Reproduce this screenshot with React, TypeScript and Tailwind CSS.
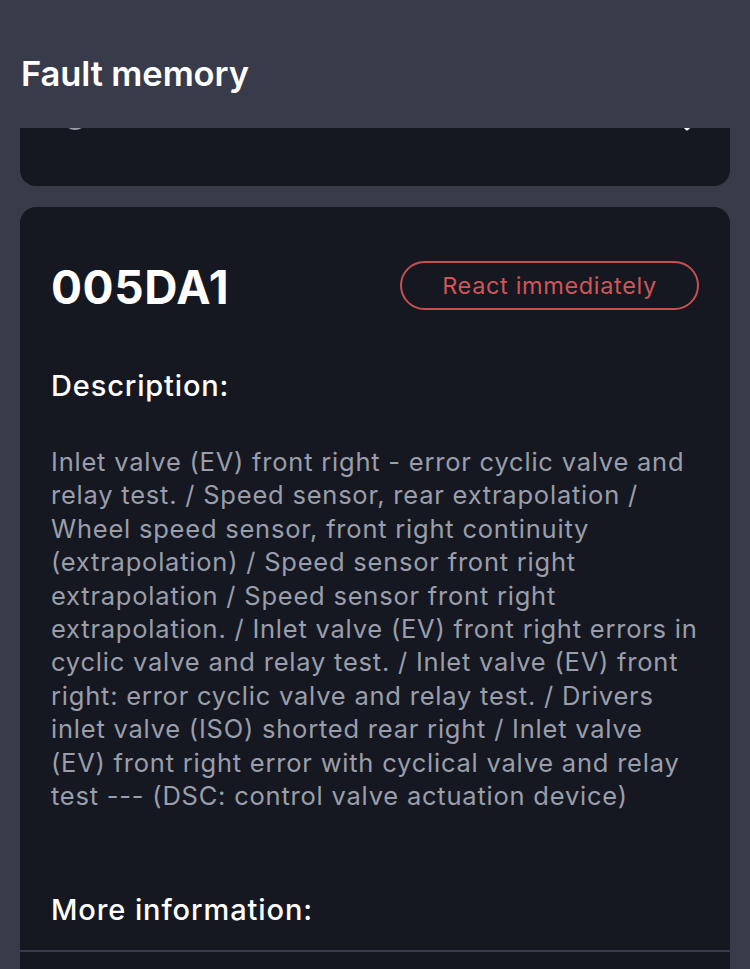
import React from "react";

const lines = [
  "Inlet valve (EV) front right - error cyclic valve and",
  "relay test. / Speed sensor, rear extrapolation /",
  "Wheel speed sensor, front right continuity",
  "(extrapolation) / Speed sensor front right",
  "extrapolation / Speed sensor front right",
  "extrapolation. / Inlet valve (EV) front right errors in",
  "cyclic valve and relay test. / Inlet valve (EV) front",
  "right: error cyclic valve and relay test. / Drivers",
  "inlet valve (ISO) shorted rear right / Inlet valve",
  "(EV) front right error with cyclical valve and relay",
  "test --- (DSC: control valve actuation device)",
];

export default function App() {
  return (
    <div
      className="w-[750px] h-[969px] overflow-hidden bg-[#383c4a] flex flex-col"
      style={{ fontFamily: "Inter, 'Noto Sans', sans-serif" }}
    >
      <div className="h-[128px] shrink-0 flex items-end pb-[33px] px-[21px] relative z-10 bg-[#383c4a]">
        <h1 className="text-[34.5px] leading-[42px] font-semibold text-white tracking-[-0.1px]">Fault memory</h1>
      </div>
      <div className="flex-1 overflow-hidden px-[20px]">
        <div className="-mt-[62px] h-[120px] rounded-[16px] bg-[#151821] relative">
          <div className="absolute left-[43px] top-[40px] w-[24px] h-[24px] rounded-full border-[3px] border-[#9a9eab]" />
          <svg className="absolute left-[656px] top-[52px]" width="22" height="14" viewBox="0 0 22 14">
            <path d="M3 3 L11 11 L19 3" stroke="#ffffff" strokeWidth="3" fill="none" strokeLinecap="round" strokeLinejoin="round" />
          </svg>
        </div>
        <div className="mt-[21px] rounded-t-[16px] bg-[#151821]">
          <div className="px-[31px] pt-[54px]">
            <div className="flex items-center justify-between">
              <div className="text-[46px] leading-[52px] font-bold text-white tracking-[0.6px]">005DA1</div>
              <div className="w-[299px] h-[49px] -mt-[3px] rounded-full border-2 border-[#c54f51] flex items-center justify-center text-[23.5px] tracking-[0.65px] text-[#d05557]">
                React immediately
              </div>
            </div>
            <div className="mt-[55px] text-[29px] leading-[36px] font-medium text-white tracking-[0.85px]">Description:</div>
            <p className="mt-[41px] text-[25.5px] leading-[33.4px] text-[#9a9eab] tracking-[0.78px]">
              {lines.map((l, i) => (
                <span key={i} className="block whitespace-nowrap">
                  {l}
                </span>
              ))}
            </p>
            <div className="mt-[80px] text-[29px] leading-[36px] font-medium text-white tracking-[0.9px] pb-[22px]">More information:</div>
          </div>
          <div className="h-[2px] bg-[#383c4a]" />
          <div className="h-[100px]" />
        </div>
      </div>
    </div>
  );
}
